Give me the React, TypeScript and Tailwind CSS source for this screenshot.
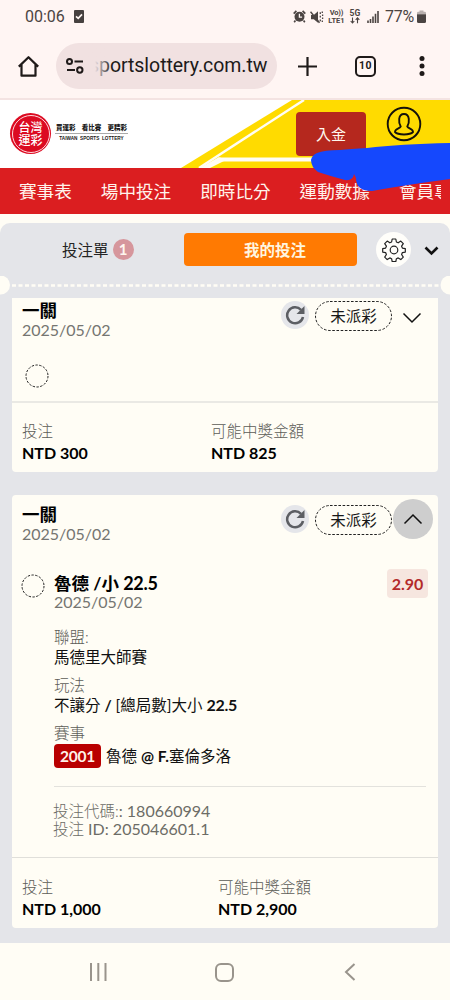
import React from "react";

const NAV_ITEMS = ["賽事表", "場中投注", "即時比分", "運動數據"];

function StatusBar() {
  return (
    <div className="flex h-[33px] items-center pl-[25px] pr-[24px] font-[Roboto,sans-serif] text-[#4b4442]">
      <span className="w-[48px] text-[16px] leading-[33px]">00:06</span>
      <svg className="ml-px" width="10" height="13" viewBox="0 0 10 13">
        <rect width="10" height="13" rx="1" fill="#46403f" />
        <path d="M2 6.4 4.2 8.4 8 4.4" fill="none" stroke="#fff6f4" strokeWidth="1.7" />
      </svg>
      <div className="flex-1" />
      <svg width="13" height="13" viewBox="0 0 13 13">
        <circle cx="6.5" cy="6.8" r="5" fill="#4b4442" />
        <path d="M.7 3.6 3.4.9M12.3 3.6 9.6.9M2.4 10.6 1.2 12.2M10.6 10.6l1.2 1.6" stroke="#4b4442" strokeWidth="1.7" />
        <path d="M6.4 3.8v3.3h2.7" fill="none" stroke="#fff6f4" strokeWidth="1.3" />
      </svg>
      <svg className="ml-[4px]" width="14" height="14" viewBox="0 0 14 14">
        <path d="M1 5h2.800L8 1.300v11.400L3.800 9.300H1z" fill="#4b4442" />
        <path d="M.5 1.800 9.500 12.800" stroke="#4b4442" strokeWidth="1.500" />
        <path d="M10.300 2.200v1.800M10.300 5.800v1.800M10.300 9.400v1.800M12.300 1.500v1.500M12.600 4.500v1.500M12.600 7.500V9M12.300 10.500V12" fill="none" stroke="#4b4442" strokeWidth="1.300" />
      </svg>
      <div className="ml-[4px] w-[17px] text-center text-[7.500px] font-bold leading-[8px]">
        <div className="whitespace-nowrap tracking-[-0.2px]">Vo))</div>
        <div>LTE1</div>
      </div>
      <div className="ml-[4px] w-[12px] text-center text-[8.500px] font-bold leading-[8px]">
        <div>5G</div>
        <svg className="mx-auto" width="10" height="7" viewBox="0 0 10 7">
          <path d="M2.500 .5v5M.7 4l1.800 2 1.800-2M7.500 6.300v-5M5.700 2.900l1.800-2 1.800 2" fill="none" stroke="#4b4442" strokeWidth="1.100" />
        </svg>
      </div>
      <svg className="ml-[6px]" width="12" height="13" viewBox="0 0 12 13">
        <path d="M1 13v-2.500M3.500 13V9M6 13V6.600M8.500 13V3.800M11 13V1" stroke="#4b4442" strokeWidth="1.600" />
      </svg>
      <span className="ml-[6px] text-[16px] leading-[33px] tracking-[-0.2px]">77%</span>
      <svg className="ml-[3px]" width="9" height="13" viewBox="0 0 9 13">
        <path d="M0 4.200V3q0-1.300 1.300-1.300H2.500V.4h4v1.300h1.200Q9 1.700 9 3v1.200z" fill="#b9b0ae" />
        <path d="M0 4.200h9V11.500Q9 13 7.500 13H1.500Q0 13 0 11.500z" fill="#4b4442" />
      </svg>
    </div>
  );
}

function AddressBar() {
  return (
    <div className="flex h-[67px] items-start border-b-2 border-[#f4e3e2] pt-[10px] font-[Roboto,sans-serif] text-[#201a19]">
      <svg className="ml-[17px] mt-[12px]" width="23" height="23" viewBox="0 0 23 23">
        <path d="M1.800 11.600 11.500 2.200l9.700 9.400M4.500 9.500v11.200h14V9.500" fill="none" stroke="#1f1a19" strokeWidth="2.200" strokeLinejoin="round" />
      </svg>
      <div className="relative ml-[16px] flex h-[46px] w-[221px] items-center overflow-hidden rounded-full bg-[#f1e1e1]">
        <svg className="ml-[9px] shrink-0" width="20" height="18" viewBox="0 0 20 18" fill="none" stroke="#1f1a19" strokeWidth="2">
          <circle cx="4.500" cy="4.500" r="2.500" />
          <path d="M9.500 4.500H18M2 13h8" />
          <circle cx="14.800" cy="13" r="2.700" />
        </svg>
        <span className="ml-[4px] whitespace-nowrap text-[19.500px] leading-[48px] tracking-[-0.05px]">sportslottery.com.tw</span>
        <div className="absolute left-[29px] top-0 h-full w-[25px] bg-gradient-to-r from-[#f1e1e1] from-40% to-[#f1e1e1]/10" />
      </div>
      <svg className="ml-[21px] mt-[14px]" width="19" height="19" viewBox="0 0 19 19">
        <path d="M9.500 0v19M0 9.500h19" stroke="#1f1a19" strokeWidth="2.200" />
      </svg>
      <div className="ml-[38px] mt-[13px] flex size-[21px] items-center justify-center rounded-[5px] border-2 border-[#1f1a19] text-[10.500px] font-bold leading-none tracking-[0.4px]">
        10
      </div>
      <svg className="ml-[43px] mt-[13px]" width="6" height="20" viewBox="0 0 6 20" fill="#1f1a19">
        <circle cx="3" cy="2.600" r="2.500" />
        <circle cx="3" cy="10" r="2.500" />
        <circle cx="3" cy="17.400" r="2.500" />
      </svg>
    </div>
  );
}

function Banner() {
  return (
    <div className="relative z-10 flex h-[68px] bg-white">
      <svg className="absolute inset-0" width="450" height="68" viewBox="0 0 450 68">
        <path d="M292 0H450V68H181z" fill="#ffdb00" />
        <path d="M304 0 199 68" stroke="#fffdf4" strokeWidth="2.500" />
        <path d="M220 59.500H330" stroke="#fffdf4" strokeWidth="4" />
        <path d="M219 57 200 68h10l16-8z" fill="#fffdf4" />
      </svg>
      <div className="relative ml-[10px] mt-[13px] flex size-[41px] items-center justify-center rounded-full bg-[#dc0a21]">
        <div className="flex size-[38px] flex-col items-center justify-center rounded-full border border-[#ffd9dc] text-[12px] font-medium leading-[13px] text-white">
          <span className="h-[13px]">台灣</span>
          <span className="h-[13px]">運彩</span>
        </div>
      </div>
      <div className="relative ml-[4px] mt-[22px] w-[73px] text-[#181818]">
        <div className="flex h-[12px] justify-between whitespace-nowrap border-b border-[#aaa] px-[1px] text-[6.500px] font-black leading-[11px]">
          <span>買運彩</span>
          <span>看比賽</span>
          <span>更精彩</span>
        </div>
        <div className="whitespace-nowrap text-center font-['Liberation_Sans',sans-serif] text-[4.700px] font-bold leading-[9px]">
          TAIWAN&nbsp; SPORTS&nbsp; LOTTERY
        </div>
      </div>
      <button className="relative ml-[168px] mt-[12px] h-[44px] w-[70px] rounded-[4px] bg-[#b5281e] text-[15px] leading-[44px] text-[#fff8ee]">
        入金
      </button>
      <svg className="relative ml-[20px] mt-[6px]" width="36" height="36" viewBox="0 0 36 36" fill="none" stroke="#15120a" strokeWidth="1.900">
        <circle cx="18" cy="18" r="16.300" />
        <path d="M14.700 20.500C12.500 17 11.800 8 18 8s5.500 9 3.300 12.500c.5 2 5.700 1.900 5.700 5.500-3 3.300-15 3.300-18 0 0-3.600 5.200-3.500 5.700-5.500z" />
      </svg>
      <svg className="absolute left-[310px] top-[36px]" width="140" height="58" viewBox="0 0 140 58">
        <path d="M7 17Q14 14 30 14Q40 13 57 12Q90 8 140 7V43Q95 49 62 55Q46 55 46 42L44 38Q43 45 35 44Q20 40 8 36Q1 31 1 24Q2 19 7 17z" fill="#1548fd" />
      </svg>
    </div>
  );
}

function Nav() {
  return (
    <nav className="flex h-[46px] gap-[29px] bg-[#db1e20] pl-[19px] pr-[9px] text-[17.600px] leading-[48px] text-[#fff4ec]">
      {NAV_ITEMS.map((t) => (
        <span key={t} className="shrink-0">{t}</span>
      ))}
      <span className="w-[42px] shrink-0 overflow-hidden whitespace-nowrap">會員專區</span>
    </nav>
  );
}

function Tabs() {
  return (
    <div className="flex h-[62px] pt-[10px]">
      <div className="ml-[62px] flex h-[33px] w-[122px] items-center text-[15.500px] text-[#242424]">
        <span className="mt-[2px]">投注單</span>
        <span className="ml-[4px] flex size-[21px] items-center justify-center rounded-full bg-[#d6969c] text-[15px] font-bold text-[#fff6ee]">1</span>
      </div>
      <button className="h-[33px] w-[173px] rounded-[4px] bg-[#ff7a02] pl-[9px] text-[15.500px] font-bold leading-[35px] text-[#fff6e0]">我的投注</button>
      <div className="ml-[19px] mt-[-1px] flex size-[35px] items-center justify-center rounded-full bg-[#fffefa]">
        <svg width="24" height="24" viewBox="0 0 24 24" fill="none" stroke="#222" strokeWidth="1.200" strokeLinejoin="round">
          <circle cx="12" cy="12" r="3.800" />
          <path d="M10.200 1h3.600l.6 3 1.800.8 2.600-1.700 2.500 2.500-1.700 2.600.8 1.900 2.900.5v3.500l-2.900.5-.8 1.900 1.700 2.600-2.500 2.500-2.600-1.700-1.800.8-.6 3h-3.600l-.6-3-1.800-.8-2.600 1.700-2.500-2.500 1.700-2.600-.8-1.900-2.900-.5v-3.500l2.900-.5.800-1.900-1.700-2.600 2.500-2.500 2.600 1.700 1.800-.8z" />
        </svg>
      </div>
      <svg className="ml-[13px] mt-[13px]" width="15" height="10" viewBox="0 0 15 10">
        <path d="M1.500 1.500 7.500 7.500l6-6" fill="none" stroke="#111" strokeWidth="2.600" />
      </svg>
    </div>
  );
}

function DashedRing() {
  return (
    <svg className="shrink-0" width="24" height="24" viewBox="0 0 24 24">
      <circle cx="12" cy="12" r="11" fill="none" stroke="#222" strokeWidth="1" strokeDasharray="2.400 1.440" />
    </svg>
  );
}

function CardHead({ open }: { open?: boolean }) {
  return (
    <div className="flex h-[38px] justify-between pl-[10px]">
      <div>
        <div className="h-[20px] text-[17.500px] font-bold leading-[20px] text-black">一關</div>
        <div className="h-[18px] text-[16px] leading-[18px] tracking-[-0.02px] text-[#757571]">2025/05/02</div>
      </div>
      <div className={open ? "flex pr-[5px]" : "flex pr-[16px]"}>
        <div className="flex size-[28px] items-center justify-center rounded-full bg-[#e5e6ea]">
          <svg width="20" height="20" viewBox="0 0 20 20">
            <path d="M16 4.800A8 8 0 1 0 18 12" fill="none" stroke="#5c5e63" strokeWidth="2.500" />
            <path d="M19.500 1v8h-8z" fill="#5c5e63" />
          </svg>
        </div>
        <div className="relative ml-[6px] h-[30px] w-[77px] text-center text-[15.500px] leading-[31px] text-[#181818]">
          <svg className="absolute inset-0" width="77" height="30" viewBox="0 0 77 30">
            <rect x=".5" y=".5" width="76" height="29" rx="14.500" fill="none" stroke="#222" strokeWidth="1" strokeDasharray="2.600 1.600" />
          </svg>
          <span className="relative">未派彩</span>
        </div>
        {open ? (
          <div className="ml-px mt-[-6px] flex size-[40px] items-center justify-center rounded-full bg-[#cecece]">
            <svg width="20" height="12" viewBox="0 0 20 12">
              <path d="m1.500 10.500 8.500-8.500 8.500 8.500" fill="none" stroke="#111" strokeWidth="1.500" />
            </svg>
          </div>
        ) : (
          <svg className="ml-[10px] mt-[11px]" width="20" height="12" viewBox="0 0 20 12">
            <path d="m1.500 1.500 8.500 8.500 8.500-8.500" fill="none" stroke="#111" strokeWidth="1.500" />
          </svg>
        )}
      </div>
    </div>
  );
}

function Amount({ label, value }: { label: string; value: string }) {
  return (
    <div>
      <div className="h-[20px] text-[15.500px] font-light leading-[20px] text-[#5c5c57]">{label}</div>
      <div className="h-[24px] text-[16px] font-bold leading-[24px] text-black">{value}</div>
    </div>
  );
}

function Field({ label, children }: { label: string; children: React.ReactNode }) {
  return (
    <div>
      <div className="h-[20px] text-[15.500px] font-light leading-[20px] text-[#5c5c57]">{label}</div>
      <div className="flex h-[20px] items-center whitespace-pre text-[15.500px] leading-[20px] text-[#111]">{children}</div>
    </div>
  );
}

export default function App() {
  return (
    <div className="h-[1000px] w-[450px] overflow-hidden bg-[#fffdf5] font-[Lato,'Noto_Sans_CJK_TC',sans-serif]">
      <div className="bg-[#fff5f3]">
        <StatusBar />
        <AddressBar />
      </div>
      <Banner />
      <Nav />
      <div className="mt-[9px] h-[720px] rounded-t-[10px] bg-[#e4e5e9]">
        <Tabs />
        <div className="relative h-[13px]">
          <svg className="absolute left-0 top-[-9px]" width="450" height="19" viewBox="0 0 450 19">
            <path d="M12 9.500H440" stroke="#fffdf5" strokeWidth="2.500" strokeDasharray="4 2.500" />
            <circle cx="0.500" cy="9" r="9.500" fill="#fffdf5" />
            <circle cx="450" cy="9" r="9.500" fill="#fffdf5" />
          </svg>
        </div>

        <section className="mx-[12px] h-[174px] rounded-b-[4px] bg-[#fffdf5] pt-[3px]">
          <CardHead />
          <div className="mb-[13px] mt-[25px] h-[24px] pl-[13px]">
            <DashedRing />
          </div>
          <div className="flex border-t-2 border-[#eae9e4] pl-[10px] pt-[18px]">
            <div className="w-[189px]"><Amount label="投注" value="NTD 300" /></div>
            <Amount label="可能中獎金額" value="NTD 825" />
          </div>
        </section>

        <section className="mx-[12px] mt-[23px] h-[433px] rounded-[4px] bg-[#fffdf5] pt-[10px]">
          <CardHead open />
          <div className="mt-[30px] flex pl-[9px] pr-[10px]">
            <div className="mt-px"><DashedRing /></div>
            <div className="ml-[9px] flex-1">
              <div className="flex justify-between">
                <div>
                  <div className="h-[20px] whitespace-nowrap text-[17.500px] font-bold leading-[20px] text-black">
                    魯德 /小 <span className="text-[18px] tracking-[-0.3px]">22.5</span>
                  </div>
                  <div className="h-[18px] text-[16px] leading-[18px] tracking-[-0.02px] text-[#757571]">2025/05/02</div>
                </div>
                <div className="mt-[-4px] h-[29px] w-[41px] rounded-[4px] bg-[#f6e6df] text-center text-[16px] font-bold leading-[30px] text-[#b32a2a]">2.90</div>
              </div>
              <div className="mt-[16px] flex flex-col gap-[8px]">
                <Field label="聯盟:">馬德里大師賽</Field>
                <Field label="玩法">
                  不讓分 <b>/ </b>[總局數]大小 <b className="text-[16px] tracking-[-0.3px]">22.5</b>
                </Field>
                <Field label="賽事">
                  <span className="mr-[5px] mt-[5px] h-[24px] w-[47px] rounded-[4px] bg-[#b90000] text-center text-[15.500px] font-bold leading-[24px] tracking-[-0.2px] text-[#fff1e8]">2001</span>
                  <span className="mt-[5px]">魯德 <b>@ F.</b>塞倫多洛</span>
                </Field>
              </div>
              <div className="mr-[2px] mt-[23px] h-px bg-[#e3e2dd]" />
              <div className="ml-[-1px] mt-[15px] text-[16px] leading-[18px] text-[#6c6c66]">
                <div className="h-[18px]"><span className="text-[15.500px] font-light">投注代碼:</span>: 180660994</div>
                <div className="h-[18px]"><span className="text-[15.500px] font-light">投注</span> ID: 205046601.1</div>
              </div>
            </div>
          </div>
          <div className="mt-[19px] flex border-t border-[#e0dfda] pl-[10px] pt-[19px]">
            <div className="w-[196px]"><Amount label="投注" value="NTD 1,000" /></div>
            <Amount label="可能中獎金額" value="NTD 2,900" />
          </div>
        </section>
      </div>

      <div className="flex h-[57px] items-center bg-[#fffdf5] pl-[89px]">
        <svg width="18" height="18" viewBox="0 0 18 18">
          <path d="M2 0v18M9.300 0v18M16.500 0v18" stroke="#99948c" strokeWidth="2" />
        </svg>
        <div className="ml-[108px] mt-px size-[19px] rounded-[6px] border-2 border-[#99948c]" />
        <svg className="ml-[110px]" width="12" height="18" viewBox="0 0 12 18">
          <path d="M10.500 1 2 9l8.500 8" fill="none" stroke="#99948c" strokeWidth="2" />
        </svg>
      </div>
    </div>
  );
}
